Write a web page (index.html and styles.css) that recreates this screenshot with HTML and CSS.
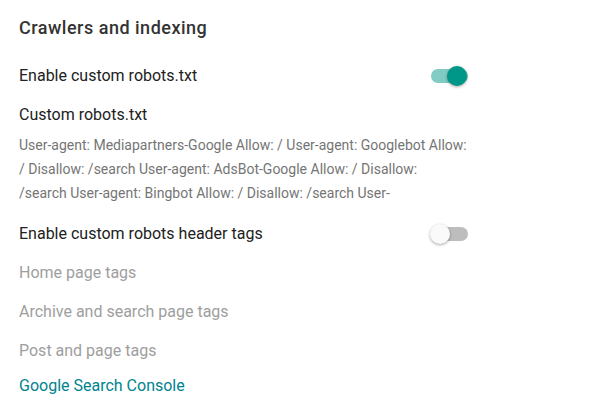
FILE: index.html
```html
<!DOCTYPE html>
<html>
<head>
<meta charset="utf-8">
<link rel="stylesheet" href="styles.css">
</head>
<body>
<div class="panel">
  <h2 class="title">Crawlers and indexing</h2>
  <div class="row row-first">
    <span class="label">Enable custom robots.txt</span>
    <span class="switch on"><span class="track"></span><span class="knob"></span></span>
  </div>
  <div class="label sub">Custom robots.txt</div>
  <div class="robots">User-agent: Mediapartners-Google Allow: / User-agent: Googlebot Allow: / Disallow: /search User-agent: AdsBot-Google Allow: / Disallow: /search User-agent: Bingbot Allow: / Disallow: /search User-</div>
  <div class="row row-second">
    <span class="label">Enable custom robots header tags</span>
    <span class="switch off"><span class="track"></span><span class="knob"></span></span>
  </div>
  <div class="disabled first-dis">Home page tags</div>
  <div class="disabled">Archive and search page tags</div>
  <div class="disabled">Post and page tags</div>
  <a class="link" href="#">Google Search Console</a>
</div>
</body>
</html>
```

FILE: styles.css
```css
html, body {
  margin: 0;
  padding: 0;
  background: #fff;
}
body {
  font-family: Roboto, "Liberation Sans", sans-serif;
  color: #212121;
}
.panel {
  width: 451px;
  padding: 16px 0 0 19px;
  display: flex;
  flex-direction: column;
}
.title {
  margin: 0;
  font-size: 18px;
  font-weight: 500;
  line-height: 24px;
  color: #333;
  letter-spacing: 0.5px;
}
.row {
  display: flex;
  align-items: center;
  justify-content: space-between;
  height: 36px;
}
.row-first {
  margin-top: 18px;
}
.row-second {
  margin-top: 11px;
}
.label {
  font-size: 16px;
  line-height: 24px;
  color: #212121;
}
.sub {
  margin-top: 9px;
}
.robots {
  margin-top: 6px;
  width: 448px;
  font-size: 14px;
  line-height: 24px;
  color: #757575;
}
.switch {
  position: relative;
  width: 37px;
  height: 20px;
  margin-right: 2px;
}
.track {
  position: absolute;
  left: 0;
  right: 0;
  top: 3px;
  height: 14px;
  border-radius: 7px;
}
.knob {
  position: absolute;
  top: 0;
  width: 20px;
  height: 20px;
  border-radius: 50%;
  box-shadow: 0 1px 3px rgba(0,0,0,0.35);
}
.on .track { background: #80cbc4; }
.on .knob { right: 1px; background: #009688; }
.off .track { background: #bdbdbd; }
.off .knob { left: -1px; background: #fafafa; }
.disabled {
  font-size: 16px;
  line-height: 24px;
  color: #9e9e9e;
  margin-top: 15px;
}
.first-dis {
  margin-top: 9px;
}
.link {
  margin-top: 11px;
  font-size: 16px;
  line-height: 24px;
  color: #00838f;
  text-decoration: none;
  align-self: flex-start;
}
```
